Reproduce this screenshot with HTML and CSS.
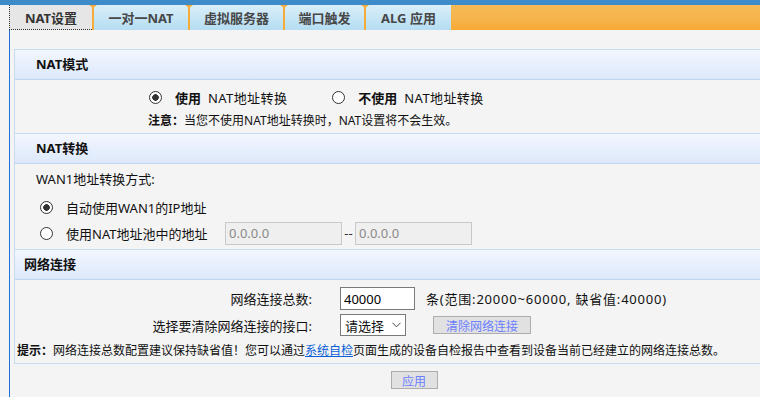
FILE: index.html
```html
<!DOCTYPE html>
<html lang="zh-CN">
<head>
  <meta charset="UTF-8">
  <title>NAT设置</title>
  <link rel="stylesheet" href="styles.css">
</head>
<body>
  <div class="topbar"></div>
  <div class="tabs">
    <div class="tabs-lead"></div>
    <a class="tab tab-nat active">NAT设置</a>
    <a class="tab tab-one">一对一NAT</a>
    <a class="tab tab-virtual">虚拟服务器</a>
    <a class="tab tab-trigger">端口触发</a>
    <a class="tab tab-alg">ALG 应用</a>
    <div class="tabs-fill"></div>
  </div>

  <div class="main">
    <div class="panel">
      <div class="sec-head">NAT模式</div>
      <div class="mode-body">
        <div class="mode-row">
          <label class="opt">
            <input type="radio" class="radio" name="natmode" checked>
            <b>使用</b><span class="opt-text">NAT地址转换</span>
          </label>
          <label class="opt opt-off">
            <input type="radio" class="radio" name="natmode">
            <b>不使用</b><span class="opt-text">NAT地址转换</span>
          </label>
        </div>
        <div class="note"><b>注意：</b>当您不使用NAT地址转换时，NAT设置将不会生效。</div>
      </div>

      <div class="sec-head">NAT转换</div>
      <div class="trans-body">
        <div class="trans-title">WAN1地址转换方式:</div>
        <div class="pool-row first">
          <input type="radio" class="radio" name="wan1" checked>
          <span class="pool-label">自动使用WAN1的IP地址</span>
        </div>
        <div class="pool-row">
          <input type="radio" class="radio" name="wan1">
          <span class="pool-label">使用NAT地址池中的地址</span>
          <input type="text" class="ip" value="0.0.0.0" disabled>
          <span class="dash">--</span>
          <input type="text" class="ip" value="0.0.0.0" disabled>
        </div>
      </div>

      <div class="sec-head net">网络连接</div>
      <div class="net-body">
        <div class="net-row">
          <span class="net-label">网络连接总数:</span>
          <input type="text" class="count" value="40000">
          <span class="unit">条(范围:20000~60000, 缺省值:40000)</span>
        </div>
        <div class="net-row second">
          <span class="net-label">选择要清除网络连接的接口:</span>
          <div class="select">
            <span>请选择</span>
            <svg width="9" height="6" viewBox="0 0 9 6"><path d="M0.5 0.8 L4.5 4.8 L8.5 0.8" fill="none" stroke="#444" stroke-width="1"/></svg>
          </div>
          <button class="btn btn-clear">清除网络连接</button>
        </div>
        <div class="tip"><b>提示：</b>网络连接总数配置建议保持缺省值！您可以通过<a href="#" class="link">系统自检</a>页面生成的设备自检报告中查看到设备当前已经建立的网络连接总数。</div>
      </div>
    </div>
    <div class="actions">
      <button class="btn btn-apply">应用</button>
    </div>
  </div>
</body>
</html>
```

FILE: styles.css
```css
* {
  box-sizing: border-box;
}
html, body {
  margin: 0;
}
body {
  background: #f4f4f4;
  font-family: "Noto Sans", "Noto Sans CJK SC", sans-serif;
  font-size: 13px;
  color: #111;
  overflow: hidden;
}
.topbar {
  height: 5px;
  background: #3e8bca;
}
.tabs {
  display: flex;
  height: 25px;
}
.tabs-lead {
  width: 9px;
  background: #f4f4f4;
}
.tab {
  position: relative;
  display: flex;
  align-items: center;
  justify-content: center;
  font-weight: bold;
  color: #474747;
  background: linear-gradient(#d9eef9, #b5ddf2);
  border-left: 2px solid #f6ac3a;
  white-space: nowrap;
}
.tab::before {
  content: "";
  position: absolute;
  top: 0;
  left: -5px;
  border-left: 4px solid transparent;
  border-right: 4px solid transparent;
  border-top: 3px solid #f6ac3a;
}
.tab.active {
  background: #e6e6e6;
  color: #333;
  border-left: 1px dotted #333;
  border-bottom: 1px dotted #333;
}
.tab.active::before {
  display: none;
}
.tab-nat { width: 83px; }
.tab-one { width: 96px; }
.tab-virtual { width: 95px; }
.tab-trigger { width: 81px; }
.tab-alg {
  width: 87px;
  border-top-right-radius: 4px;
}
.tabs-fill {
  flex: 1;
  background: linear-gradient(#f5b955, #f6b44c 55%, #f7aa34);
}

.main {
  margin-left: 9px;
  border-left: 1px solid #1f70d8;
  padding: 19px 0 0 4px;
  height: 367px;
}
.panel {
  width: 800px;
  border-left: 1px solid #c6dbf0;
  border-right: 1px solid #c6dbf0;
  border-bottom: 1px solid #c6dbf0;
}
.sec-head {
  height: 31px;
  line-height: 29px;
  padding-left: 21px;
  font-weight: bold;
  border-top: 1px solid #c8dcf0;
  border-bottom: 1px solid #bfd5ee;
  background: linear-gradient(#f3f7fe, #dce8fa);
}
.sec-head.net {
  padding-left: 9px;
}

.radio {
  appearance: none;
  -webkit-appearance: none;
  margin: 0;
  width: 13px;
  height: 13px;
  border: 1px solid #333;
  border-radius: 50%;
  background: #fff;
  flex: none;
}
.radio:checked {
  background: radial-gradient(circle, #333 0 3px, #fff 3.6px);
}

.mode-body {
  padding: 8px 0 3px 133px;
}
.mode-row {
  display: flex;
  align-items: center;
  height: 18px;
  padding-left: 1px;
}
.opt {
  display: flex;
  align-items: center;
}
.opt .radio {
  margin-right: 13px;
}
.opt-text {
  margin-left: 7px;
  letter-spacing: 0.4px;
}
.opt-off {
  margin-left: 45px;
}
.note {
  margin-top: 6px;
  height: 18px;
  line-height: 18px;
  font-size: 12px;
}

.trans-body {
  padding: 6px 0 5px 0;
}
.trans-title {
  padding-left: 21px;
  height: 18px;
  line-height: 18px;
}
.pool-row {
  display: flex;
  align-items: center;
  height: 22px;
  padding-left: 25px;
  margin-top: 4px;
}
.pool-row.first {
  margin-top: 8px;
}
.pool-row .radio {
  margin-right: 13px;
}
.pool-label {
  width: 159px;
}
.ip {
  width: 117px;
  height: 23px;
  padding: 0 3px;
  font: inherit;
  color: #8a8a8a;
  background: #efefef;
  border: 1px solid #c9c9c9;
}
.dash {
  width: 13px;
  text-align: center;
  color: #333;
}

.net-body {
  padding: 7px 0 3px 0;
}
.net-row {
  display: flex;
  align-items: center;
  height: 23px;
}
.net-row.second {
  margin-top: 4px;
  height: 22px;
}
.net-label {
  width: 297px;
  text-align: right;
  margin-right: 28px;
}
.count {
  width: 75px;
  height: 23px;
  padding: 0 3px;
  font: inherit;
  color: #000;
  background: #fff;
  border: 1px solid #7a7a7a;
}
.unit {
  margin-left: 11px;
  letter-spacing: 0.8px;
}
.select {
  display: flex;
  align-items: center;
  justify-content: space-between;
  width: 66px;
  height: 22px;
  padding: 0 4px 0 4px;
  background: #fff;
  border: 1px solid #7a7a7a;
}
.btn {
  font-family: inherit;
  font-size: 12px;
  color: #6c80ff;
  background: #e1e1e1;
  border: 1px solid #adadad;
  padding: 0;
}
.btn-clear {
  margin-left: 27px;
  width: 98px;
  height: 18px;
}
.tip {
  margin-top: 6px;
  padding-left: 2px;
  height: 18px;
  line-height: 18px;
  font-size: 12px;
  white-space: nowrap;
}
.link {
  color: #0a5fd6;
  text-decoration: underline;
}

.actions {
  width: 800px;
  display: flex;
  justify-content: center;
  padding-top: 7px;
}
.btn-apply {
  width: 47px;
  height: 18px;
}
```
